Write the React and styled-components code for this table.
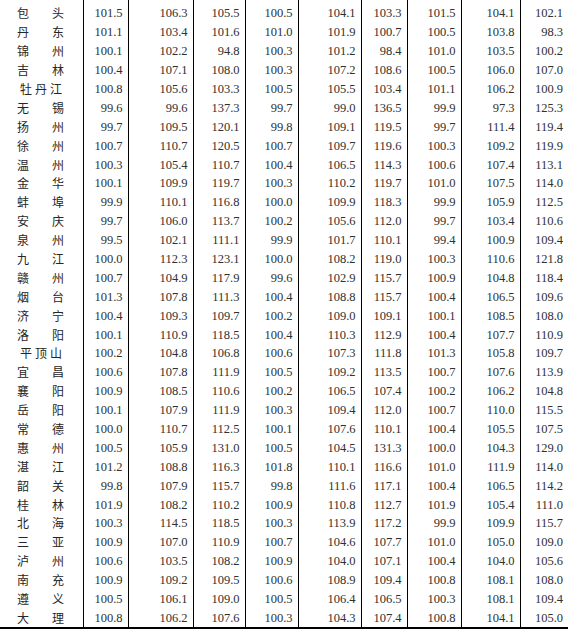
import React from "react";
import styled, { createGlobalStyle } from "styled-components";

const GlobalStyle = createGlobalStyle`
  html, body {
    margin: 0;
    padding: 0;
    background: #ffffff;
  }
`;

const Page = styled.div`
  width: 571px;
  height: 638px;
  overflow: hidden;
  background: #ffffff;
`;

const Table = styled.table`
  border-collapse: collapse;
  table-layout: fixed;
  width: 568px;
  font-family: "Liberation Serif", "Times New Roman", serif;
  font-size: 12px;
  color: #2b2b2b;
  border-bottom: 2px solid #000;
`;

const Row = styled.tr`
  height: 18.9px;
`;

// the tail of the row above, cut off at the top edge
const CutRow = styled.tr`
  height: 4px;

  td {
    padding: 0;
    height: 4px;
    line-height: 0;
    font-size: 0;
  }
`;

const NameCell = styled.td`
  padding: 0;
  border-right: 1px solid #000;
  font-family: "Noto Sans CJK SC", "Noto Sans CJK JP", sans-serif;
  font-size: 12px;
  color: #262626;
  line-height: 18px;
`;

const NameInner = styled.div`
  width: 47px;
  margin-left: 17px;
  box-sizing: border-box;
  padding: ${(p) => (p.$three ? "0 2px 0 3px" : "0")};
  display: flex;
  justify-content: space-between;
`;

const NumCell = styled.td`
  padding: 0 5px 0 0;
  text-align: right;
  font-family: "Liberation Serif", "Times New Roman", serif;
  font-size: 12.5px;
  color: #303030;
  border-right: ${(p) => (p.$last ? "none" : "1px solid #000")};
  line-height: 18px;
  white-space: nowrap;
`;

const widths = [83, 45, 65, 52, 53, 63, 46, 54, 59, 48];

const rows = [
  ["包头", "101.5", "106.3", "105.5", "100.5", "104.1", "103.3", "101.5", "104.1", "102.1"],
  ["丹东", "101.1", "103.4", "101.6", "101.0", "101.9", "100.7", "100.5", "103.8", "98.3"],
  ["锦州", "100.1", "102.2", "94.8", "100.3", "101.2", "98.4", "101.0", "103.5", "100.2"],
  ["吉林", "100.4", "107.1", "108.0", "100.3", "107.2", "108.6", "100.5", "106.0", "107.0"],
  ["牡丹江", "100.8", "105.6", "103.3", "100.5", "105.5", "103.4", "101.1", "106.2", "100.9"],
  ["无锡", "99.6", "99.6", "137.3", "99.7", "99.0", "136.5", "99.9", "97.3", "125.3"],
  ["扬州", "99.7", "109.5", "120.1", "99.8", "109.1", "119.5", "99.7", "111.4", "119.4"],
  ["徐州", "100.7", "110.7", "120.5", "100.7", "109.7", "119.6", "100.3", "109.2", "119.9"],
  ["温州", "100.3", "105.4", "110.7", "100.4", "106.5", "114.3", "100.6", "107.4", "113.1"],
  ["金华", "100.1", "109.9", "119.7", "100.3", "110.2", "119.7", "101.0", "107.5", "114.0"],
  ["蚌埠", "99.9", "110.1", "116.8", "100.0", "109.9", "118.3", "99.9", "105.9", "112.5"],
  ["安庆", "99.7", "106.0", "113.7", "100.2", "105.6", "112.0", "99.7", "103.4", "110.6"],
  ["泉州", "99.5", "102.1", "111.1", "99.9", "101.7", "110.1", "99.4", "100.9", "109.4"],
  ["九江", "100.0", "112.3", "123.1", "100.0", "108.2", "119.0", "100.3", "110.6", "121.8"],
  ["赣州", "100.7", "104.9", "117.9", "99.6", "102.9", "115.7", "100.9", "104.8", "118.4"],
  ["烟台", "101.3", "107.8", "111.3", "100.4", "108.8", "115.7", "100.4", "106.5", "109.6"],
  ["济宁", "100.4", "109.3", "109.7", "100.2", "109.0", "109.1", "100.1", "108.5", "108.0"],
  ["洛阳", "100.1", "110.9", "118.5", "100.4", "110.3", "112.9", "100.4", "107.7", "110.9"],
  ["平顶山", "100.2", "104.8", "106.8", "100.6", "107.3", "111.8", "101.3", "105.8", "109.7"],
  ["宜昌", "100.6", "107.8", "111.9", "100.5", "109.2", "113.5", "100.7", "107.6", "113.9"],
  ["襄阳", "100.9", "108.5", "110.6", "100.2", "106.5", "107.4", "100.2", "106.2", "104.8"],
  ["岳阳", "100.1", "107.9", "111.9", "100.3", "109.4", "112.0", "100.7", "110.0", "115.5"],
  ["常德", "100.0", "110.7", "112.5", "100.1", "107.6", "110.1", "100.4", "105.5", "107.5"],
  ["惠州", "100.5", "105.9", "131.0", "100.5", "104.5", "131.3", "100.0", "104.3", "129.0"],
  ["湛江", "101.2", "108.8", "116.3", "101.8", "110.1", "116.6", "101.0", "111.9", "114.0"],
  ["韶关", "99.8", "107.9", "115.7", "99.8", "111.6", "117.1", "100.4", "106.5", "114.2"],
  ["桂林", "101.9", "108.2", "110.2", "100.9", "110.8", "112.7", "101.9", "105.4", "111.0"],
  ["北海", "100.3", "114.5", "118.5", "100.3", "113.9", "117.2", "99.9", "109.9", "115.7"],
  ["三亚", "100.9", "107.0", "110.9", "100.7", "104.6", "107.7", "101.0", "105.0", "109.0"],
  ["泸州", "100.6", "103.5", "108.2", "100.9", "104.0", "107.1", "100.4", "104.0", "105.6"],
  ["南充", "100.9", "109.2", "109.5", "100.6", "108.9", "109.4", "100.8", "108.1", "108.0"],
  ["遵义", "100.5", "106.1", "109.0", "100.5", "106.4", "106.5", "100.3", "108.1", "109.4"],
  ["大理", "100.8", "106.2", "107.6", "100.3", "104.3", "107.4", "100.8", "104.1", "105.0"],
];

export default function App() {
  return (
    <>
      <GlobalStyle />
      <Page>
        <Table>
          <colgroup>
            {widths.map((w, i) => (
              <col key={i} style={{ width: w }} />
            ))}
          </colgroup>
          <tbody>
            <CutRow>
              {widths.map((w, i) =>
                i === 0 ? (
                  <NameCell key={i} />
                ) : (
                  <NumCell key={i} $last={i === widths.length - 1} />
                )
              )}
            </CutRow>
            {rows.map(([name, ...vals]) => (
              <Row key={name}>
                <NameCell>
                  <NameInner $three={name.length === 3}>
                    {name.split("").map((ch, i) => (
                      <span key={i}>{ch}</span>
                    ))}
                  </NameInner>
                </NameCell>
                {vals.map((v, i) => (
                  <NumCell key={i} $last={i === vals.length - 1}>
                    {v}
                  </NumCell>
                ))}
              </Row>
            ))}
          </tbody>
        </Table>
      </Page>
    </>
  );
}
